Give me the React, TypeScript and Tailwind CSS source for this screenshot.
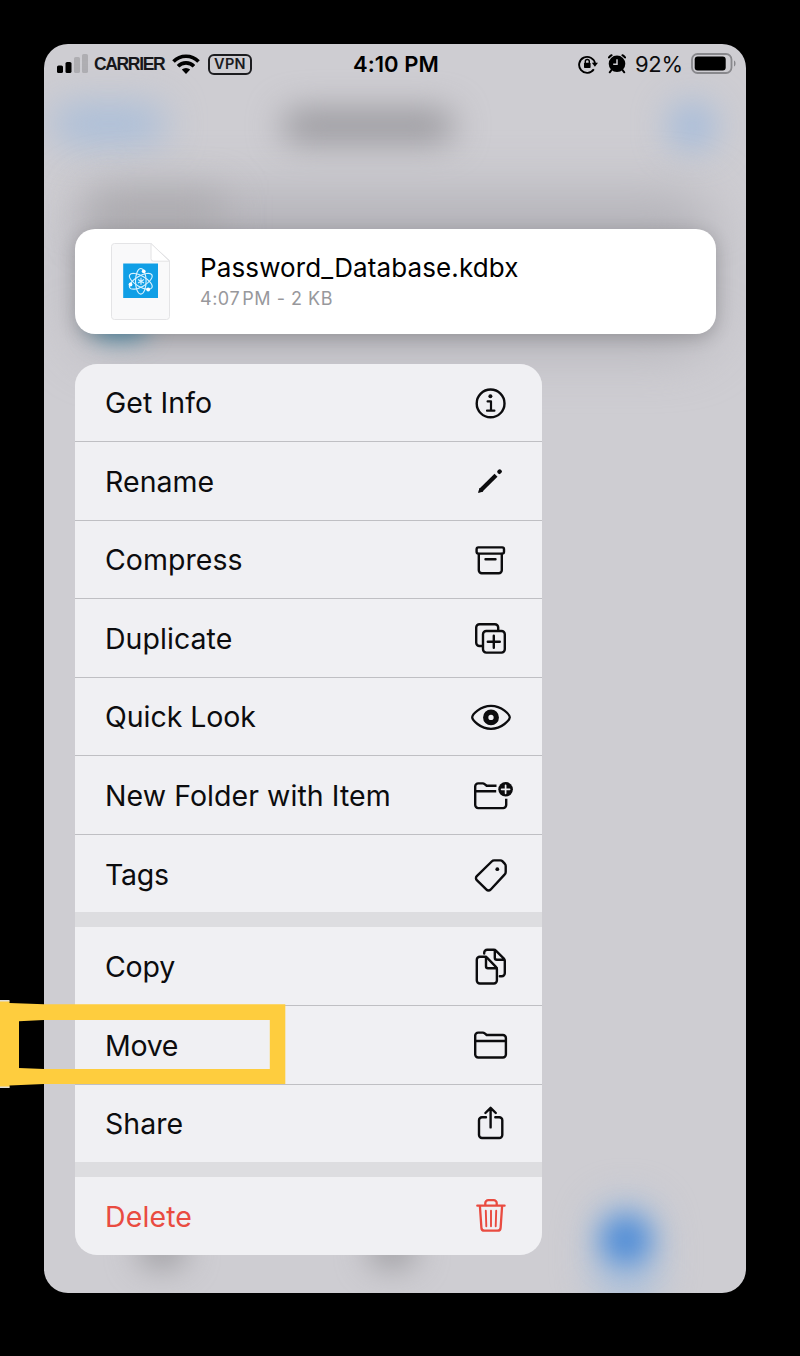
import type { ReactNode } from "react";

function Glyph({ children }: { children: ReactNode }) {
  return (
    <svg
      viewBox="0 0 48 48"
      className="h-12 w-12 shrink-0"
      fill="none"
      stroke="currentColor"
      strokeWidth="2.4"
      strokeLinecap="round"
      strokeLinejoin="round"
    >
      {children}
    </svg>
  );
}

const InfoIcon = () => (
  <Glyph>
    <circle cx="24.6" cy="24.4" r="13.9" />
    <circle cx="24.4" cy="17.3" r="2" fill="currentColor" stroke="none" />
    <path d="M21.6 22.4h3.4v9M21 31.7h7.4" strokeWidth="2.2" />
  </Glyph>
);

const PencilIcon = () => (
  <Glyph>
    <path d="M14.800 33.300L30 18.200" strokeWidth="4.200" strokeLinecap="butt" />
    <path d="M12.900 35.200l1.100-3.600 2.500 2.500z" fill="currentColor" strokeWidth="1.400" />
    <path d="M33.400 14.800l.3-.3" strokeWidth="4.400" />
  </Glyph>
);

const ArchiveIcon = () => (
  <Glyph>
    <rect x="10.6" y="11.4" width="27.4" height="6.2" rx="1.8" />
    <path d="M12.8 18v16.200a3 3 0 0 0 3 3h17a3 3 0 0 0 3-3V18M19.500 23.300h10" />
  </Glyph>
);

const DuplicateIcon = () => (
  <Glyph>
    <path d="M16.500 32h-3a3.300 3.300 0 0 1-3.300-3.300V13.500a3.300 3.300 0 0 1 3.300-3.300h15.400a3.300 3.300 0 0 1 3.300 3.300v3" />
    <rect x="17" y="17" width="21.800" height="21.600" rx="3.300" />
    <path d="M27.800 21.700v12M21.800 27.700h12" />
  </Glyph>
);

const EyeIcon = () => (
  <Glyph>
    <path
      d="M6.200 24.300c0-2.400 7.800-11.500 18.800-11.500s18.800 9.100 18.800 11.500S36 35.900 25 35.900 6.200 26.700 6.200 24.300z"
      strokeWidth="2.300"
    />
    <circle cx="25" cy="24.400" r="5.300" strokeWidth="5.300" />
  </Glyph>
);

const FolderPlusIcon = () => (
  <Glyph>
    <path d="M30.500 14.800H20.700l-2.100-1.700c-.6-.5-1-.7-1.800-.7h-4.600a3 3 0 0 0-3 3v18.700a3 3 0 0 0 3 3h25a3 3 0 0 0 3-3v-6.300M9.200 20.200h21" strokeLinecap="butt" />
    <circle cx="39.600" cy="18.300" r="7.300" fill="currentColor" stroke="none" />
    <path d="M39.600 14.300v8M35.600 18.300h8" stroke="#f0f0f3" strokeWidth="1.700" />
  </Glyph>
);

const TagIcon = () => (
  <Glyph>
    <path d="M28.200 10.400h6c1 0 1.700.3 2.400 1l2.300 2.500c.5.600.8 1.200.8 2v6c0 1.100-.4 2-1.200 2.700L24.500 39.700a2.800 2.800 0 0 1-4 0l-9.700-9.500a2.800 2.800 0 0 1 0-4l14.900-14.700c.7-.7 1.500-1.100 2.500-1.100z" />
    <circle cx="31.300" cy="19.200" r="1.900" fill="currentColor" stroke="none" />
  </Glyph>
);

const CopyIcon = () => (
  <Glyph>
    <path d="M18.200 11.500v-.7a3 3 0 0 1 3-3h6.600c1 0 1.600.3 2.300 1l7.800 7.800c.7.700.9 1.300.9 2.200v12.400a3 3 0 0 1-3 3h-2M28.800 8v7.700c0 1.400.7 2 2 2h7.700" />
    <path d="M13.800 14.800h5c1 0 1.700.300 2.400 1l8.700 9c.7.700 1 1.400 1 2.300v11.400a3 3 0 0 1-3 3H13.800a3 3 0 0 1-3-3V17.800a3 3 0 0 1 3-3z" />
    <path d="M20 15v9.300c0 1.400.6 2 2 2h8.700" />
  </Glyph>
);

const FolderIcon = () => (
  <Glyph>
    <path d="M12.200 11.600h4.600c.8 0 1.300.2 1.900.7l2 1.700h16.200a3 3 0 0 1 3 3v16.500a3 3 0 0 1-3 3H12.200a3 3 0 0 1-3-3V14.600a3 3 0 0 1 3-3zM9.200 20h30.700" />
  </Glyph>
);

const ShareIcon = () => (
  <Glyph>
    <path d="M20 17.200h-4a3 3 0 0 0-3 3v14.800a3 3 0 0 0 3 3h17.300a3 3 0 0 0 3-3V20.200a3 3 0 0 0-3-3h-4M24.600 27.400V8M19.400 13l5.200-5.200 5.200 5.200" />
  </Glyph>
);

const TrashIcon = () => (
  <Glyph>
    <path d="M11.300 13.700h27.300M19.300 13.500v-2.400a3 3 0 0 1 3-3h5.400a3 3 0 0 1 3 3v2.400M13.900 14l1.500 21.800a3 3 0 0 0 3 2.800h13.200a3 3 0 0 0 3-2.800L36.100 14" strokeWidth="2.300" />
    <path d="M19.800 18.700l.5 15.500M25 18.700v15.500M30.200 18.700l-.5 15.500" strokeWidth="1.900" />
  </Glyph>
);

type Item = { label: string; icon: ReactNode; size: string; text: string; danger?: boolean };

const groups: Item[][] = [
  [
    { label: "Get Info", icon: <InfoIcon />, size: "h-[78px]", text: "tracking-[0.080px]" },
    { label: "Rename", icon: <PencilIcon />, size: "h-[79px]", text: "pt-[2px] tracking-[0.050px]" },
    { label: "Compress", icon: <ArchiveIcon />, size: "h-[78px]", text: "tracking-[0.030px]" },
    { label: "Duplicate", icon: <DuplicateIcon />, size: "h-[79px]", text: "pt-[2px] tracking-[0.050px]" },
    { label: "Quick Look", icon: <EyeIcon />, size: "h-[78px]", text: "tracking-[-0.050px]" },
    { label: "New Folder with Item", icon: <FolderPlusIcon />, size: "h-[79px]", text: "pt-[2px] tracking-[0.060px]" },
    { label: "Tags", icon: <TagIcon />, size: "h-[77px]", text: "pt-[2px] tracking-[-0.300px]" },
  ],
  [
    { label: "Copy", icon: <CopyIcon />, size: "h-[79px]", text: "pt-[2px] tracking-[-0.200px]" },
    { label: "Move", icon: <FolderIcon />, size: "h-[79px]", text: "pt-[2px] tracking-[-0.300px]" },
    { label: "Share", icon: <ShareIcon />, size: "h-[77px]", text: "tracking-[0px]" },
  ],
  [{ label: "Delete", icon: <TrashIcon />, size: "h-[78px]", text: "pt-[2px] tracking-[0.120px]", danger: true }],
];

function Menu() {
  return (
    <div className="mt-[30px] ml-[31px] flex w-[467px] flex-col gap-[15px] overflow-hidden rounded-[22px] bg-[#dddde0]">
      {groups.map((group, g) => (
        <div key={g} className="flex flex-col bg-[#f0f0f3]">
          {group.map((item) => (
            <div
              key={item.label}
              className={`flex items-center justify-between border-b border-[#bfbfc3] pr-7 pl-[30px] last:border-b-0 ${item.size} ${item.danger ? "text-[#e94b40]" : "text-[#0c0c0e]"}`}
            >
              <span className={`text-[28.500px] leading-[34px] whitespace-nowrap ${item.text}`}>{item.label}</span>
              {item.icon}
            </div>
          ))}
        </div>
      ))}
    </div>
  );
}

function StatusBar() {
  return (
    <div className="relative flex h-10 items-center justify-between pr-[9px] pl-[13px] text-black">
      <div className="flex items-center">
        <svg viewBox="0 0 32 20" className="h-5 w-8" fill="currentColor">
          <rect x="0" y="11.500" width="6" height="7.500" rx="1.600" />
          <rect x="8.500" y="8" width="6" height="11" rx="1.600" />
          <rect x="17" y="3" width="6" height="16" rx="1.600" opacity=".15" />
          <rect x="25" y="0" width="6" height="19" rx="1.600" opacity=".15" />
        </svg>
        <span className="ml-[5px] w-[70px] font-['Liberation_Sans',Arial,sans-serif] text-[17.500px] font-bold tracking-[-1.350px] whitespace-nowrap text-[#17171a]">
          CARRIER
        </span>
        <svg viewBox="0 0 28 20" className="ml-2 h-5 w-7" fill="none" stroke="currentColor" strokeWidth="3.600">
          <path d="M1.500 7.500a17.500 17.500 0 0 1 25 0" />
          <path d="M6 12.200a11.300 11.300 0 0 1 16 0" />
          <path d="M14 20l-4.200-4.400a6 6 0 0 1 8.400 0z" fill="currentColor" stroke="none" />
        </svg>
        <span className="ml-2 flex h-[21px] w-11 items-center justify-center rounded-[6px] border-2 border-[#1c1c1f] text-[14.500px] font-semibold tracking-[0.300px] text-[#1c1c1f]">
          VPN
        </span>
      </div>
      <span className="absolute top-[5px] left-[309px] text-[22px] leading-[30px] font-semibold tracking-[0.050px] whitespace-nowrap">
        4:10 PM
      </span>
      <div className="flex items-center">
        <svg viewBox="0 0 20 20" className="h-5 w-5" fill="none" stroke="currentColor" strokeWidth="1.900">
          <path d="M15.800 15.300A8 8 0 1 1 17 9.500" />
          <path d="M13.800 8.700H20l-3.100 4.100z" fill="currentColor" stroke="none" />
          <rect x="6" y="8.800" width="6.600" height="5.300" rx=".8" fill="currentColor" stroke="none" />
          <path d="M7.300 9V7.500a2 2 0 0 1 4 0V9" strokeWidth="1.400" />
        </svg>
        <svg viewBox="0 0 20 20" className="ml-[9px] h-5 w-5" fill="none" stroke="currentColor">
          <circle cx="10" cy="9.800" r="8.300" fill="currentColor" stroke="none" />
          <path d="M2 3.400a10 10 0 0 1 2.600-2.200M18 3.400a10 10 0 0 0-2.600-2.200" strokeWidth="2" strokeLinecap="round" />
          <path d="M4.400 16.200l-1.700 2.100M15.600 16.200l1.700 2.100" strokeWidth="2" strokeLinecap="round" />
          <path d="M10 5.200v5H6.200" stroke="#cecdd2" strokeWidth="1.500" />
        </svg>
        <span className="ml-2 w-12 text-[22px] tracking-[-0.300px] whitespace-nowrap text-[#0c0c0e]">92%</span>
        <svg viewBox="0 0 46 22" className="ml-2 h-[22px] w-[46px]" fill="none">
          <rect x="1" y="1" width="39.500" height="19" rx="5.500" stroke="#88888c" strokeWidth="1.800" />
          <rect x="3.700" y="3.600" width="31" height="13.800" rx="3" fill="#000" />
          <path d="M43 7.500c2 .5 2 5.500 0 6z" fill="#88888c" />
        </svg>
      </div>
    </div>
  );
}

function FileThumbnail() {
  return (
    <svg viewBox="0 0 60 78" className="h-[78px] w-[60px]" fill="none">
      <path d="M3.500 .5h36.300L58.500 17.500V73.500a3 3 0 0 1-3 3H3.500a3 3 0 0 1-3-3V3.500a3 3 0 0 1 3-3z" fill="#f9f9fa" stroke="#e4e4e6" />
      <path d="M40 .5v15.200a2.500 2.500 0 0 0 2.500 2.500H58.500z" fill="#fff" stroke="#e2e2e4" />
      <rect x="12.200" y="20.500" width="34.800" height="34.500" fill="#109fe6" />
      <g stroke="#d9f2ff" strokeWidth="1.150" transform="translate(0 -.7)">
        <ellipse cx="29.800" cy="39" rx="5.300" ry="12.800" />
        <ellipse cx="29.800" cy="39" rx="5.300" ry="12.800" transform="rotate(60 29.800 39)" />
        <ellipse cx="29.800" cy="39" rx="5.300" ry="12.800" transform="rotate(-60 29.800 39)" />
        <path d="M30 35.500v7M27 37.200l6 3.500M27 40.700l6-3.500" />
      </g>
      <g fill="#fff">
        <circle cx="32.700" cy="28.300" r="1.900" />
        <circle cx="19.500" cy="41.500" r="1.900" />
        <circle cx="37.200" cy="46.500" r="1.900" />
      </g>
    </svg>
  );
}

function Backdrop() {
  return (
    <div className="absolute inset-0">
      <div className="absolute top-[62px] left-[8px] h-9 w-[114px] rounded-full bg-[#a5bcda] blur-[19px]" />
      <div className="absolute top-[66px] left-[238px] h-8 w-[172px] rounded-full bg-[#96959a] blur-[17px]" />
      <div className="absolute top-[60px] left-[626px] h-11 w-11 rounded-full bg-[#9ab7dd] blur-[18px]" />
      <div className="absolute top-[148px] left-[30px] h-[160px] w-[640px] rounded-[40px] bg-[#b4b3b9] blur-[26px]" />
      <div className="absolute top-[150px] left-[45px] h-10 w-[135px] bg-[#aba9ad] blur-[20px]" />
      <div className="absolute top-[263px] left-[48px] h-8 w-[56px] rounded-full bg-[#5795b2] blur-[12px]" />
      <div className="absolute top-[1190px] left-[94px] h-8 w-12 rounded-full bg-[#98979b] blur-[16px]" />
      <div className="absolute top-[1190px] left-[324px] h-8 w-12 rounded-full bg-[#98979b] blur-[16px]" />
      <div className="absolute top-[1155px] left-[548px] h-[110px] w-[68px] rounded-full bg-[#b0c2da] blur-[18px]" />
      <div className="absolute top-[1171px] left-[557px] h-[50px] w-[50px] rounded-full bg-[#4f8cd6] blur-[14px]" />
    </div>
  );
}

export default function App() {
  return (
    <main className="relative flex h-[1356px] w-[800px] items-start overflow-hidden bg-black pt-11 pl-11 font-['Inter','Liberation_Sans',sans-serif]">
      <div className="relative h-[1248.500px] w-[702px] overflow-hidden rounded-[24px] bg-[#cecdd2]">
        <Backdrop />
        <div className="relative flex flex-col">
          <StatusBar />
          <div className="mt-[145px] ml-[31px] flex h-[105px] w-[641px] items-center rounded-[20px] bg-white pl-9 shadow-[0_4px_18px_rgba(0,0,0,0.2)]">
            <FileThumbnail />
            <div className="ml-[29px] flex flex-col pt-[2px]">
              <span className="text-[26px] leading-8 tracking-[0.120px] text-black">Password_Database.kdbx</span>
              <span className="text-[18px] leading-[30px] tracking-[0.520px] text-[#98989c]">4:07{"\u200A"}PM - 2 KB</span>
            </div>
          </div>
          <Menu />
        </div>
      </div>
      <svg viewBox="0 0 286 88" className="pointer-events-none absolute top-[1000px] left-0 h-[88px] w-[286px]">
        <path d="M0 1h9.500v2L44 4.300h241.300V84H44L9.500 85.500V87.500H0zM19 21.300V68L44 69h225.800V20H44z" fill="#fecd3e" fillRule="evenodd" />
        <path d="M0 .8h9.500M0 87.200h9.500" stroke="#dfddd5" strokeWidth="1.500" />
      </svg>
    </main>
  );
}
